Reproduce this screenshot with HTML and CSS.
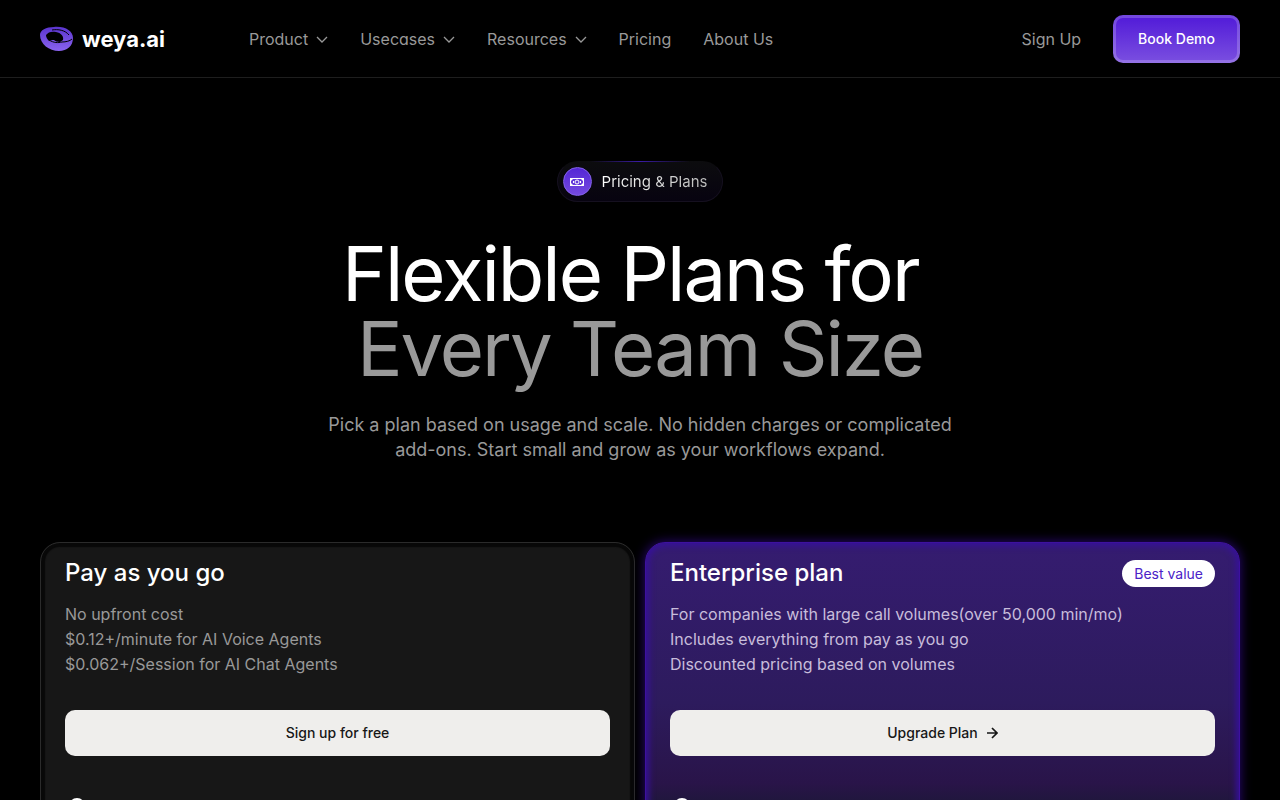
FILE: index.html
```
<!DOCTYPE html>
<html lang="en">
<head>
<meta charset="utf-8">
<meta name="viewport" content="width=device-width, initial-scale=1">
<title>weya.ai Pricing</title>
<link rel="stylesheet" href="styles.css">
</head>
<body>
<header class="header">
  <a class="logo" href="#">
    <svg class="logo-mark" viewBox="0 0 34 26" aria-hidden="true">
      <defs><linearGradient id="mark" x1="0" y1="0" x2="0" y2="1"><stop offset="0" stop-color="#5b35cf"/><stop offset="1" stop-color="#8a63ee"/></linearGradient></defs>
      <path fill="url(#mark)" d="M0 9C0 4 6 1 14 1c11-1 19 4 19 11 0 8-6 13-14 13C9 25 0 18 0 9Z"/>
      <path fill="#000" d="M6 9c2-3 6-4 10-3 5 1 8 4 7 8-1 1-2 1-3 2-3 0-5-1-6-2-2 0-4 0-5 1-2-2-3-4-3-6Z"/>
      <path fill="none" stroke="#000" stroke-width="1" d="M9 14c5 3 9 3 13 2 4 0 8-1 10-3M12 4c6-1 13 0 17 5"/>
    </svg>
    <span>weya.ai</span>
  </a>
  <nav class="nav" aria-label="Main">
    <button class="nav-item" type="button">Product <svg class="chevron" viewBox="0 0 12 8" aria-hidden="true"><path d="m1 2 5 5 5-5"/></svg></button>
    <button class="nav-item" type="button">Usecases <svg class="chevron" viewBox="0 0 12 8" aria-hidden="true"><path d="m1 2 5 5 5-5"/></svg></button>
    <button class="nav-item" type="button">Resources <svg class="chevron" viewBox="0 0 12 8" aria-hidden="true"><path d="m1 2 5 5 5-5"/></svg></button>
    <a class="nav-item" href="#">Pricing</a>
    <a class="nav-item" href="#">About Us</a>
  </nav>
  <div class="actions">
    <a class="nav-item" href="#">Sign Up</a>
    <button class="demo" type="button">Book Demo</button>
  </div>
</header>
<main>
  <section class="hero">
    <div class="pill">
      <span class="pill-icon"><svg viewBox="0 0 14 10" aria-hidden="true"><path fill-rule="evenodd" d="M0 1h14v8H0Zm3 1L1 4v2l2 2h8l2-2V4l-2-2Z"/><circle cx="7" cy="5" r="2" fill="none" stroke="#fff"/><path d="M3 4h1v2H3zM10 4h1v2h-1z"/></svg></span>
      <span class="pill-text">Pricing &amp; Plans</span>
    </div>
    <h1 class="title">Flexible Plans for&nbsp;<br><span class="title-muted">Every Team Size</span></h1>
    <p class="lead">Pick a plan based on usage and scale. No hidden charges or complicated add-ons. Start small and grow as your workflows expand.</p>
  </section>
  <section class="plans" aria-label="Plans">
    <article class="card">
      <div class="card-head"><h2>Pay as you go</h2></div>
      <p class="desc">No upfront cost<br>$0.12+/minute for AI Voice Agents<br>$0.062+/Session for AI Chat Agents</p>
      <button class="cta" type="button">Sign up for free</button>
      <span class="bullet"></span>
    </article>
    <article class="card card-enterprise">
      <div class="card-head"><h2>Enterprise plan</h2><span class="tag">Best value</span></div>
      <p class="desc">For companies with large call volumes(over 50,000 min/mo)<br>Includes everything from pay as you go<br>Discounted pricing based on volumes</p>
      <button class="cta" type="button">Upgrade Plan <svg class="arrow" viewBox="0 0 12 14" aria-hidden="true"><path d="M1 8h10M6 3l5 5-5 5"/></svg></button>
      <span class="bullet"></span>
    </article>
  </section>
</main>
</body>
</html>
```
FILE: styles.css
```
* { box-sizing: border-box; }
html { background: #000; }
body { margin: 0; background: #000; color: #fff; font-family: Inter, "Liberation Sans", sans-serif; overflow-x: hidden; }
button { font: inherit; cursor: pointer; }
a { color: inherit; text-decoration: none; }
.header { display: flex; align-items: center; height: 78px; padding: 0 40px; border-bottom: 1px solid #1e1e1e; }
.logo { display: flex; align-items: center; gap: 8px; margin-right: 84px; font-size: 22px; font-weight: 700; line-height: 28px; }
.logo-mark { width: 34px; height: 26px; }
.nav { display: flex; gap: 32px; }
.nav-item { display: flex; align-items: center; gap: 8px; padding: 0; border: 0; background: none; color: #999; font-size: 16px; line-height: 24px; font-feature-settings: "cv11"; }
.chevron { width: 12px; height: 8px; fill: none; stroke: currentColor; stroke-width: 1.3; }
.actions { display: flex; align-items: center; gap: 32px; margin-left: auto; }
.demo { height: 48px; padding: 0 22px; border: 3px solid rgba(255,255,255,.2); border-radius: 10px; background: linear-gradient(#5019d8, #7b50e0) border-box; color: #fff; font-size: 14px; font-weight: 500; }
.hero { display: flex; flex-direction: column; align-items: center; padding: 83px 40px 0; text-align: center; }
.pill { display: flex; align-items: center; gap: 10px; height: 41px; padding: 0 15px 0 5px; border: 1px solid #15101f; border-top-color: transparent; border-radius: 21px; background-color: #070310; background-image: linear-gradient(90deg, transparent 20%, #3a1ba5 50%, transparent 80%), linear-gradient(#0c0c0e, #070310); background-size: 100% 1px, 100% 100%; background-repeat: no-repeat; background-origin: border-box; }
.pill-icon { display: flex; align-items: center; justify-content: center; width: 29px; height: 29px; border: 1px solid #8462ea; border-radius: 50%; background: linear-gradient(#5326d5, #754ae0); }
.pill-icon svg { width: 14px; height: 10px; fill: #fff; }
.pill-text { font-size: 15px; line-height: 24px; background: linear-gradient(90deg, #fff, #bbb); -webkit-background-clip: text; background-clip: text; color: transparent; }
.title { margin: 34px 0 0; font-size: 76px; font-weight: 400; line-height: 75px; letter-spacing: -2px; }
.title-muted { color: #999; }
.lead { max-width: 640px; margin: 26px 0 0; color: #999; font-size: 18px; line-height: 25px; }
.plans { display: grid; grid-template-columns: 1fr 1fr; gap: 10px; padding: 80px 40px 40px; }
.card { min-height: 400px; padding: 13px 24px 24px; border: 1px solid #2b2b2b; border-radius: 20px; background: #171717; box-shadow: inset 0 0 1px 4px #080808; }
.card-enterprise { border-color: #3d119f; background: linear-gradient(#351c70 0, #2d1b5d 160px, #291449 240px, #1f173c 260px); box-shadow: inset 0 0 6px 3px #37119a, 0 0 12px #2a0878; }
.card-head { display: flex; align-items: center; justify-content: space-between; height: 34px; }
.card h2 { margin: 0; font-size: 24px; font-weight: 500; line-height: 34px; }
.tag { padding: 3px 12px; border-radius: 14px; background: #fff; color: #4b22c7; font-size: 14px; line-height: 21px; }
.desc { margin: 12px 0 33px; color: #999; font-size: 16px; line-height: 25px; }
.card-enterprise .desc { color: #c8bddb; }
.cta { display: flex; align-items: center; justify-content: center; gap: 8px; width: 100%; height: 46px; padding: 0 0 2px; border: 0; border-radius: 10px; background: #efeeec; color: #171717; font-size: 14px; font-weight: 500; }
.arrow { width: 12px; height: 14px; fill: none; stroke: currentColor; stroke-width: 1.7; }
.bullet { display: block; width: 16px; height: 16px; margin: 42px 0 0 4px; border-radius: 50%; background: #fff; }
```
